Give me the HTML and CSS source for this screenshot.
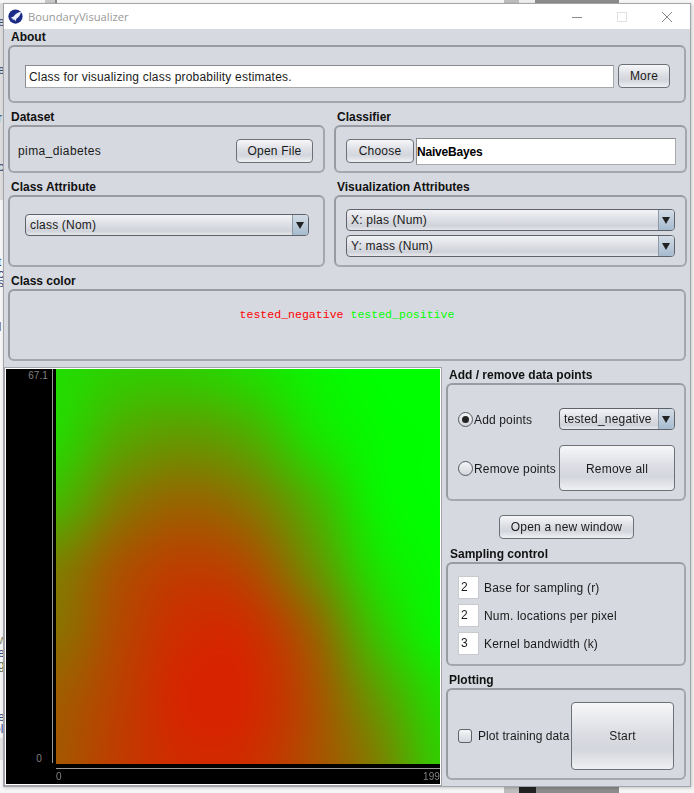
FILE: index.html
```html
<!DOCTYPE html>
<html lang="en">

<head>
  <meta charset="UTF-8" />
  <meta name="viewport" content="width=device-width, initial-scale=1" />
  <title>BoundaryVisualizer</title>
  <link rel="stylesheet" href="styles.css">
</head>

<body>
  <!-- bits of whatever is behind the window -->
  <div class="desktop">
    <span class="frag f1">e</span>
    <span class="frag f2">e</span>
    <span class="frag f3">r</span>
    <span class="frag f4">c</span>
    <span class="frag f5">t</span>
    <span class="frag f6">c</span>
    <span class="frag f7">s</span>
    <span class="frag f8">ul</span>
    <span class="frag f9">w</span>
    <span class="frag f10">e</span>
    <span class="frag f11">g</span>
    <span class="frag f12">e</span>
    <span class="frag f13">ol</span>
  </div>

  <div class="window">
    <div class="titlebar">
      <svg class="app-icon" width="15" height="15" viewBox="0 0 16 16">
        <circle cx="8" cy="8" r="7.6" fill="#1b2a86" />
        <path d="M2.5 9.5 L6 8 C8 5 11 3.5 13.8 3 C13.6 6 12 8.5 9 10.5 L8 13 L6.5 11 L5 12 L5 10 Z" fill="#eef1f8" />
      </svg>
      <span class="title-text">BoundaryVisualizer</span>
      <div class="win-buttons">
        <svg width="12" height="12" viewBox="0 0 12 12"><path d="M1 6.5H11" stroke="#8a8a8a" /></svg>
        <svg width="12" height="12" viewBox="0 0 12 12"><rect x="1.5" y="1.5" width="9" height="9" fill="none" stroke="#e2e2e2" /></svg>
        <svg width="12" height="12" viewBox="0 0 12 12"><path d="M1 1L11 11M11 1L1 11" stroke="#8a8a8a" /></svg>
      </div>
    </div>

    <div class="content">
      <section>
        <h3>About</h3>
        <div class="box about-box">
          <div class="field about-field">Class for visualizing class probability estimates.</div>
          <button class="btn more-btn">More</button>
        </div>
      </section>

      <div class="two-col">
        <section>
          <h3>Dataset</h3>
          <div class="box dataset-box">
            <span class="dataset-name">pima_diabetes</span>
            <button class="btn open-btn">Open File</button>
          </div>
        </section>
        <section>
          <h3>Classifier</h3>
          <div class="box classifier-box">
            <button class="btn choose-btn">Choose</button>
            <div class="field classifier-field">NaiveBayes</div>
          </div>
        </section>
      </div>

      <div class="two-col">
        <section>
          <h3>Class Attribute</h3>
          <div class="box class-attr-box">
            <div class="combo"><span class="combo-text">class (Nom)</span><span class="combo-arrow"></span></div>
          </div>
        </section>
        <section>
          <h3>Visualization Attributes</h3>
          <div class="box vis-box">
            <div class="combo"><span class="combo-text">X: plas (Num)</span><span class="combo-arrow"></span></div>
            <div class="combo"><span class="combo-text">Y: mass (Num)</span><span class="combo-arrow"></span></div>
          </div>
        </section>
      </div>

      <section class="color-group">
        <h3>Class color</h3>
        <div class="box color-box">
          <span class="neg">tested_negative</span> <span class="pos">tested_positive</span>
        </div>
      </section>

      <div class="main-row">
        <div class="plot">
          <div class="plot-top">
            <div class="y-axis"><span>67.1</span><span class="y-zero">0</span></div>
            <div class="y-line"></div>
            <canvas id="surface" class="surface" width="384" height="395"></canvas>
          </div>
          <div class="x-axis"><span>0</span><span>199</span></div>
        </div>

        <div class="side">
          <section>
            <h3>Add / remove data points</h3>
            <div class="box points-box">
              <label class="radio-label"><span class="radio checked"></span>Add points</label>
              <div class="combo"><span class="combo-text">tested_negative</span><span class="combo-arrow"></span></div>
              <label class="radio-label"><span class="radio"></span>Remove points</label>
              <button class="btn remove-btn">Remove all</button>
            </div>
          </section>

          <button class="btn window-btn">Open a new window</button>

          <section>
            <h3 class="sampling-title">Sampling control</h3>
            <div class="box sampling-box">
              <div class="sample-row"><div class="field num">2</div>Base for sampling (r)</div>
              <div class="sample-row"><div class="field num">2</div>Num. locations per pixel</div>
              <div class="sample-row"><div class="field num">3</div>Kernel bandwidth (k)</div>
            </div>
          </section>

          <section class="plotting-group">
            <h3>Plotting</h3>
            <div class="box plotting-box">
              <label class="check-label"><span class="check"></span>Plot training data</label>
              <button class="btn start-btn">Start</button>
            </div>
          </section>
        </div>
      </div>
    </div>
  </div>

  <script src="script.js"></script>
</body>

</html>
```

FILE: styles.css
```css
* {
  box-sizing: border-box;
}

body {
  margin: 0;
  padding: 3px 0 0 3px;
  width: 694px;
  height: 793px;
  overflow: hidden;
  position: relative;
  background-color: #f6f6f6;
  font-family: "Liberation Sans", Arial, sans-serif;
  font-size: 12px;
  letter-spacing: 0.2px;
  color: #1a1a1a;
}

.desktop {
  position: absolute;
  top: 0;
  left: 0;
  width: 694px;
  height: 793px;
  overflow: hidden;
  background:
    linear-gradient(to right, #f6f6f6 0 45px, #c8c8c8 45px 55px, #8a8a8a 55px 57px, #f6f6f6 57px 504px, #bdbdbd 504px 519px, #eeeeee 519px 535px, #8c8c8c 535px 619px, #f6f6f6 619px) top left / 694px 3px no-repeat,
    linear-gradient(to right, #f6f6f6 0 504px, #bdbdbd 504px 519px, #222222 519px 536px, #8c8c8c 536px 619px, #f6f6f6 619px) bottom left / 694px 6px no-repeat,
    linear-gradient(to bottom, #dcdcdc 0 200px, #f6f6f6 200px 738px, #e2e2e2 738px 760px, #f6f6f6 760px) top left / 4px 793px no-repeat;
}

.frag {
  position: absolute;
  left: -2px;
  line-height: 14px;
  font-size: 12px;
  color: #3a4a78;
}

.f1 { top: 15px; }
.f2 { top: 63px; }
.f3 { top: 111px; }
.f4 { top: 160px; }
.f5 { top: 255px; }
.f6 { top: 267px; }
.f7 { top: 276px; }
.f8 { top: 320px; left: -8px; color: #6a5a30; }
.f9 { top: 633px; color: #8a8a6a; }
.f10 { top: 646px; }
.f11 { top: 658px; color: #5a6a4a; }
.f12 { top: 710px; }
.f13 { top: 722px; left: -6px; color: #4a4a9a; }

.window {
  position: relative;
  width: 688px;
  height: 784px;
  background-color: #d6d9e0;
  border: 1px solid #a3a5aa;
  box-shadow: 1px 1px 3px rgba(0, 0, 0, 0.2);
}

.titlebar {
  height: 25px;
  background-color: white;
  display: flex;
  align-items: center;
  padding-left: 4px;
}

.app-icon {
  margin-right: 5px;
}

.title-text {
  font-family: "Open Sans", sans-serif;
  font-size: 11.2px;
  letter-spacing: 0;
  color: #999;
}

.win-buttons {
  margin-left: auto;
  display: flex;
  gap: 33px;
  margin-right: 17px;
}

.content {
  padding: 0 4px;
}

h3 {
  margin: 0;
  height: 16px;
  padding-left: 3px;
  font-size: 12px;
  line-height: 17px;
  font-weight: bold;
  letter-spacing: 0;
  color: #111;
}

.box {
  border: 2px solid #a4a7ad;
  border-top-color: #989ba1;
  border-left-color: #989ba1;
  border-radius: 6px;
  background-color: #d6d9e0;
}

.two-col {
  display: grid;
  grid-template-columns: 317px 353px;
  gap: 9px;
  margin-top: 6px;
}

.btn {
  font-family: inherit;
  font-size: 12px;
  letter-spacing: 0.2px;
  color: #1a1a1a;
  padding: 0;
  border: 1px solid #6d7076;
  border-radius: 4px;
  background: linear-gradient(to bottom, #f7f7f9 0%, #dcdee4 45%, #d3d6dc 70%, #eff0f3 100%);
}

.field {
  background-color: white;
  border: 1px solid #a7a9ad;
  border-top-color: #8a8c90;
  border-left-color: #8a8c90;
}

.about-box {
  height: 58px;
  display: flex;
  align-items: center;
  gap: 4px;
  padding: 4px 14px 0 15px;
}

.about-field {
  flex: 1;
  height: 23px;
  line-height: 22px;
  padding-left: 3px;
}

.more-btn {
  width: 52px;
  height: 24px;
}

.dataset-box {
  height: 48px;
  display: flex;
  align-items: center;
  justify-content: space-between;
  padding: 4px 10px 0 8px;
}

.dataset-name {
  letter-spacing: 0.4px;
}

.open-btn {
  width: 77px;
  height: 24px;
}

.classifier-box {
  height: 48px;
  display: flex;
  align-items: center;
  gap: 2px;
  padding: 4px 9px 0 10px;
}

.choose-btn {
  width: 68px;
  height: 24px;
}

.classifier-field {
  flex: 1;
  height: 27px;
  line-height: 26px;
  padding-left: 0;
  font-weight: bold;
  letter-spacing: -0.2px;
  color: #000;
}

.class-attr-box {
  height: 72px;
  padding: 17px 14px 0 15px;
}

.vis-box {
  height: 72px;
  padding: 12px 10px 0;
  display: flex;
  flex-direction: column;
  gap: 4px;
}

.combo {
  height: 22px;
  display: flex;
  border: 1px solid #5f6369;
  border-radius: 4px;
  overflow: hidden;
  background: linear-gradient(to bottom, #f2f3f6 0%, #dcdee4 50%, #cfd2d9 80%, #e6e7eb 100%);
}

.combo-text {
  flex: 1;
  line-height: 21px;
  padding-left: 4px;
}

.combo-arrow {
  width: 16px;
  position: relative;
  background: linear-gradient(to bottom, #d3dce6 0%, #a6bbcf 100%);
  border-left: 1px solid #8d99a6;
}

.combo-arrow::after {
  content: "";
  position: absolute;
  top: 7px;
  left: 3px;
  border-left: 4px solid transparent;
  border-right: 4px solid transparent;
  border-top: 7px solid #222;
}

.color-group {
  margin-top: 6px;
}

.color-box {
  height: 72px;
  padding-top: 16px;
  text-align: center;
  font-family: "Liberation Mono", monospace;
  font-size: 11.55px;
  letter-spacing: 0;
  line-height: 16px;
}

.neg {
  color: #ff0000;
}

.pos {
  color: #00ff00;
}

.main-row {
  display: flex;
  gap: 5px;
  margin-top: 6px;
  margin-left: -3px;
}

.plot {
  width: 436px;
  height: 417px;
  margin-top: 1px;
  background-color: black;
  border: 1px solid white;
  outline: 1px solid #a3a5aa;
  display: flex;
  flex-direction: column;
}

.plot-top {
  display: flex;
  height: 395px;
}

.y-axis {
  width: 46px;
  display: flex;
  flex-direction: column;
  justify-content: space-between;
  align-items: flex-end;
  padding: 2px 4px 0 0;
  font-size: 10px;
  line-height: 10px;
  letter-spacing: 0.1px;
  color: #808080;
}

.y-zero {
  margin-right: 6px;
}

.y-line {
  width: 1px;
  margin-bottom: 1px;
  background-color: #9a9a9a;
}

.surface {
  display: block;
  margin-left: 3px;
  width: 384px;
  height: 395px;
}

.x-axis {
  margin-top: 4px;
  margin-left: 50px;
  flex: 1;
  border-top: 1px solid #9a9a9a;
  display: flex;
  justify-content: space-between;
  align-items: flex-end;
  padding-bottom: 2px;
  font-size: 10px;
  line-height: 10px;
  letter-spacing: 0.1px;
  color: #808080;
}

.side {
  width: 241px;
  display: flex;
  flex-direction: column;
}

.points-box {
  height: 118px;
  display: grid;
  grid-template-columns: 101px 116px;
  grid-template-rows: 22px 46px;
  row-gap: 15px;
  padding: 23px 0 0 10px;
}

.radio-label {
  display: flex;
  align-items: center;
  gap: 1px;
  padding-top: 1px;
  letter-spacing: 0.15px;
}

.radio {
  width: 15px;
  height: 15px;
  border: 1px solid #555a61;
  border-radius: 50%;
  background: linear-gradient(to bottom, #f4f5f7, #d3d6dc);
  position: relative;
}

.radio.checked::after {
  content: "";
  position: absolute;
  top: 3px;
  left: 3px;
  width: 7px;
  height: 7px;
  border-radius: 50%;
  background-color: #222;
}

.remove-btn {
  padding-top: 1px;
}

.window-btn {
  width: 135px;
  height: 24px;
  margin: 14px 0 7px 53px;
}

.sampling-title {
  padding-left: 4px;
}

.sampling-box {
  height: 104px;
  padding: 12px 10px 0;
  display: flex;
  flex-direction: column;
  gap: 5px;
}

.sample-row {
  display: flex;
  align-items: center;
  gap: 5px;
}

.num {
  width: 21px;
  height: 23px;
  line-height: 21px;
  padding-left: 2px;
  border-color: #c8cacd;
}

.plotting-group {
  margin-top: 6px;
}

.plotting-box {
  height: 92px;
  display: flex;
  align-items: center;
  padding: 4px 10px 0;
}

.check-label {
  display: flex;
  align-items: center;
  gap: 6px;
  white-space: nowrap;
  letter-spacing: 0.08px;
}

.check {
  width: 14px;
  height: 14px;
  border: 1px solid #5f6369;
  border-radius: 3px;
  background: linear-gradient(to bottom, #f4f5f7, #d3d6dc);
}

.start-btn {
  margin-left: auto;
  width: 103px;
  height: 68px;
}
```

FILE: script.js
```js
// red level of the class probability surface, sampled on a coarse grid
const grid = [
  [34, 48, 50, 35, 12, 0, 0],
  [40, 82, 98, 80, 30, 5, 0],
  [72, 128, 150, 132, 75, 12, 0],
  [125, 168, 188, 175, 110, 30, 3],
  [140, 180, 206, 205, 155, 60, 8],
  [160, 188, 214, 212, 172, 100, 35],
  [165, 192, 208, 205, 172, 125, 50]
];

function catmull(a, b, c, d, t) {
  return b + 0.5 * t * (c - a + t * (2 * a - 5 * b + 4 * c - d + t * (3 * (b - c) + d - a)));
}

function cell(r, c) {
  r = Math.max(0, Math.min(grid.length - 1, r));
  c = Math.max(0, Math.min(grid[0].length - 1, c));
  return grid[r][c];
}

function sample(u, v) {
  const c = Math.floor(u);
  const r = Math.floor(v);
  const rows = [];
  for (let i = -1; i <= 2; i++) {
    rows.push(catmull(cell(r + i, c - 1), cell(r + i, c), cell(r + i, c + 1), cell(r + i, c + 2), u - c));
  }
  return catmull(rows[0], rows[1], rows[2], rows[3], v - r);
}

const canvas = document.getElementById("surface");
const ctx = canvas.getContext("2d");
const image = ctx.createImageData(canvas.width, canvas.height);

for (let y = 0; y < canvas.height; y++) {
  for (let x = 0; x < canvas.width; x++) {
    const red = Math.max(0, Math.min(216, sample(x / 64, y / 65.8)));
    const i = (y * canvas.width + x) * 4;
    image.data[i] = red;
    image.data[i + 1] = 255 - red * 1.02;
    image.data[i + 2] = 0;
    image.data[i + 3] = 255;
  }
}

ctx.putImageData(image, 0, 0);
```
